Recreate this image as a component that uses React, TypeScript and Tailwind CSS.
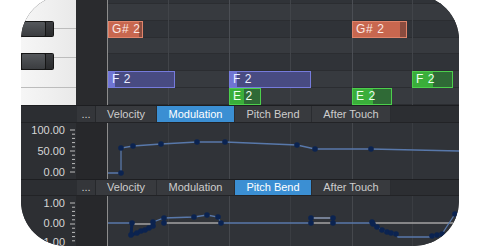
import React from 'react';

const rows = [
  { h: 9, dark: true },
  { h: 17, dark: false },
  { h: 17, dark: true },
  { h: 16, dark: false },
  { h: 17, dark: true },
  { h: 17, dark: false },
  { h: 17, dark: false },
];

const gridLines = [60, 121, 182, 244, 304];

const noteColors: any = {
  red: { border: 'border-[#e0846b]', dark: 'bg-[#8a4c3f]', bright: 'bg-[#c8674f]', text: 'text-[#fbe9e4]' },
  blue: { border: 'border-[#767bdc]', dark: 'bg-[#484b82]', bright: 'bg-[#6f74d2]', text: 'text-[#eceeff]' },
  green: { border: 'border-[#4ccf4c]', dark: 'bg-[#2f6a36]', bright: 'bg-[#3aae3a]', text: 'text-[#effff0]' },
};

const notes = [
  { label: 'G# 2', color: 'red', left: 0, top: 26, width: 35, bright: 30 },
  { label: 'G# 2', color: 'red', left: 244, top: 26, width: 55, bright: 47 },
  { label: 'F 2', color: 'blue', left: 0, top: 76, width: 67, bright: 6 },
  { label: 'F 2', color: 'blue', left: 121, top: 76, width: 82, bright: 7 },
  { label: 'F 2', color: 'green', left: 304, top: 76, width: 41, bright: 20 },
  { label: 'E 2', color: 'green', left: 121, top: 93, width: 32, bright: 14 },
  { label: 'E 2', color: 'green', left: 244, top: 93, width: 40, bright: 20 },
];

const Note = ({ n }: { n: any }) => {
  const c = noteColors[n.color];
  return (
    <div
      className={`absolute h-[17px] border ${c.border} ${c.dark} overflow-hidden`}
      style={{ left: n.left, top: n.top, width: n.width }}
    >
      <div className={`absolute left-0 top-0 bottom-0 ${c.bright}`} style={{ width: n.bright }} />
      <span className={`relative block whitespace-nowrap pl-[3px] text-[12px] tracking-[0.6px] leading-[15px] ${c.text}`}>
        {n.label}
      </span>
    </div>
  );
};

const BlackKey = ({ top, h }: { top: number; h: number }) => (
  <div className="absolute left-0 w-[33px] bg-[#161616] rounded-r-[2px] flex p-[1px]" style={{ top, height: h }}>
    <div className="flex-1 bg-gradient-to-b from-[#55585c] to-[#3b3d40] rounded-[1px]" />
    <div className="w-[7px] ml-[1px] bg-gradient-to-b from-[#3c3e41] to-[#2a2b2d]" />
  </div>
);

const TabBar = ({ active }: { active: string }) => {
  const tabs = [
    { name: 'Velocity', w: 'w-[61px]' },
    { name: 'Modulation', w: 'w-[78px]' },
    { name: 'Pitch Bend', w: 'w-[77px]' },
    { name: 'After Touch', w: 'w-[79px]' },
  ];
  return (
    <div className="flex h-full border-t border-[#1d1e21] bg-[#2c2e32] text-[11px]">
      <div className="w-[56px]" />
      <div className="w-[19px] bg-[#34363a] text-[#d0d0d0] flex items-center justify-center border-r border-[#26282b]">
        ...
      </div>
      {tabs.map((t) => (
        <div
          key={t.name}
          className={`${t.w} flex items-center justify-center border-r border-[#2a2c30] ${
            t.name === active ? 'bg-[#3b8fd3] text-white' : 'bg-[#383a3e] text-[#cdcdcd]'
          }`}
        >
          {t.name}
        </div>
      ))}
      <div className="flex-1" />
    </div>
  );
};

const Labels = ({ labels }: { labels: { text: string; y: number }[] }) => {
  const ticks = [];
  for (let y = labels[0].y; y <= labels[labels.length - 1].y + 1; y += 4.2) ticks.push(y);
  return (
    <div className="relative w-[55px] bg-[#2d2f33]">
      {labels.map((l) => (
        <div
          key={l.text}
          className="absolute right-[11px] text-[11px] leading-[12px] text-[#d6d6d6]"
          style={{ top: l.y - 6 }}
        >
          {l.text}
        </div>
      ))}
      <svg className="absolute inset-0" width="55" height="60">
        {ticks.map((y, i) => (
          <line key={i} x1={i % 5 === 0 ? 49 : 51} x2="54" y1={y} y2={y} stroke="#bdbdbd" strokeWidth="1" />
        ))}
      </svg>
    </div>
  );
};

const Graph = ({ children }: { children: React.ReactNode }) => (
  <div className="relative flex-1 bg-[#303338] border-l border-[#8d8d8d]">
    {gridLines.map((x, i) => (
      <div
        key={x}
        className={`absolute top-0 bottom-0 w-px ${i === 1 || i === 3 ? 'bg-[#45484d]' : 'bg-[#3a3d42]'}`}
        style={{ left: x }}
      />
    ))}
    <svg className="absolute inset-0" width="351" height="60">
      {children}
    </svg>
  </div>
);

const Dot = ({ x, y }: { x: number; y: number }) => <circle cx={x} cy={y} r="2.8" fill="#0b2350" />;

const modPts = [
  [13, 50], [13, 25], [25, 23], [53, 21], [89, 19], [117, 19], [189, 22], [207, 26], [263, 26],
];

const pbDots = [
  [24, 27], [23, 39], [29, 37], [33, 35], [37, 34], [41, 32], [45, 30], [45, 26],
  [56, 22], [56, 27], [86, 21], [99, 19], [110, 21], [113, 27],
  [203, 22], [203, 27], [225, 22], [225, 27], [264, 26],
  [265, 28], [269, 31], [274, 34], [279, 36], [283, 37], [288, 38],
  [324, 40], [329, 39], [334, 38], [347, 18],
];

const App = () => {
  return (
    <div className="w-[480px] h-[246px] bg-white overflow-hidden pl-[21px]" style={{ fontFamily: '"Liberation Sans", Arial, sans-serif' }}>
      <div className="mt-[-5px] w-[438px] h-[251px] rounded-[45px] overflow-hidden bg-[#2c2e32] flex flex-col">
        {/* piano roll */}
        <div className="flex h-[110px] shrink-0">
          <div className="relative w-[55px] flex flex-col bg-gradient-to-r from-[#f6f6f6] to-[#e9e9e9]">
            <div className="h-[34px] border-b border-[#bcbcbc]" />
            <div className="h-[29px] border-b border-[#bcbcbc]" />
            <div className="h-[30px] border-b border-[#bcbcbc]" />
            <div className="flex-1" />
            <BlackKey top={26} h={16} />
            <BlackKey top={58} h={17} />
          </div>
          <div className="w-[31px] bg-[#2a2b2e]" />
          <div className="relative flex-1 border-l border-[#8d8d8d] flex flex-col">
            {rows.map((r, i) => (
              <div
                key={i}
                className={`border-b border-[#2b2d31] ${r.dark ? 'bg-[#303338]' : 'bg-[#373a3f]'}`}
                style={{ height: r.h }}
              />
            ))}
            {gridLines.map((x, i) => (
              <div
                key={x}
                className={`absolute top-0 bottom-0 w-px ${i === 1 || i === 3 ? 'bg-[#4b4e54]' : 'bg-[#414449]'}`}
                style={{ left: x }}
              />
            ))}
            {notes.map((n, i) => (
              <Note key={i} n={n} />
            ))}
          </div>
        </div>

        <div className="h-[17px] shrink-0">
          <TabBar active="Modulation" />
        </div>

        {/* modulation lane */}
        <div className="flex h-[57px] shrink-0 border-t border-[#222326]">
          <Labels labels={[{ text: '100.00', y: 7 }, { text: '50.00', y: 28 }, { text: '0.00', y: 49 }]} />
          <div className="w-[31px] bg-[#27282b]" />
          <Graph>
            <polyline
              points={'0,50 13,50 ' + modPts.map((p) => p.join(',')).join(' ') + ' 351,28'}
              fill="none"
              stroke="#5878aa"
              strokeWidth="1.3"
            />
            {modPts.map((p, i) => (
              <Dot key={i} x={p[0]} y={p[1]} />
            ))}
          </Graph>
        </div>

        <div className="h-[16px] shrink-0">
          <TabBar active="Pitch Bend" />
        </div>

        {/* pitch bend lane */}
        <div className="flex flex-1 border-t border-[#222326]">
          <Labels labels={[{ text: '1.00', y: 7 }, { text: '0.00', y: 27 }, { text: '-1.00', y: 46 }]} />
          <div className="w-[31px] bg-[#27282b]" />
          <Graph>
            <polyline points="0,27 24,27" fill="none" stroke="#5878aa" strokeWidth="1.3" />
            <polyline points="24,27 23,39 29,37 33,35 37,34 41,32 45,30" fill="none" stroke="#0b2350" strokeWidth="3" />
            <polyline points="45,26 56,22 86,21 99,19 110,21 113,27" fill="none" stroke="#5878aa" strokeWidth="1.3" />
            <line x1="24" y1="28" x2="45" y2="28" stroke="#a3a3a3" strokeWidth="1.5" />
            <line x1="56" y1="27" x2="113" y2="27" stroke="#a3a3a3" strokeWidth="1.5" />
            <line x1="113" y1="27" x2="203" y2="27" stroke="#5878aa" strokeWidth="1.3" />
            <line x1="203" y1="22" x2="225" y2="22" stroke="#8b9ab3" strokeWidth="1.3" />
            <line x1="203" y1="27" x2="225" y2="27" stroke="#a3a3a3" strokeWidth="1.5" />
            <line x1="225" y1="27" x2="264" y2="27" stroke="#5878aa" strokeWidth="1.3" />
            <line x1="264" y1="27" x2="351" y2="27" stroke="#a3a3a3" strokeWidth="1.5" />
            <polyline
              points="264,26 265,28 269,31 274,34 279,36 283,37 288,38 290,41 324,41 329,39 334,38 347,18"
              fill="none"
              stroke="#5878aa"
              strokeWidth="1.3"
            />
            {pbDots.map((p, i) => (
              <Dot key={i} x={p[0]} y={p[1]} />
            ))}
          </Graph>
        </div>
      </div>
    </div>
  );
};

export default App;
